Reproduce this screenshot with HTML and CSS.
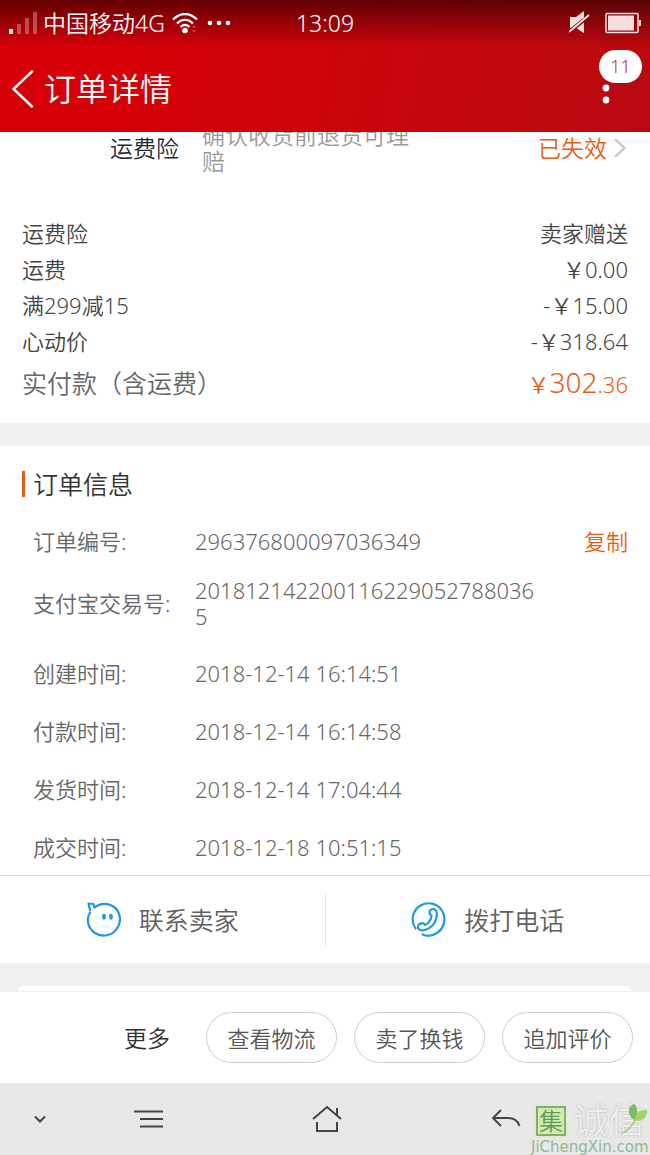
FILE: index.html
```
<!DOCTYPE html>
<html lang="zh-CN">
<head>
    <meta charset="UTF-8">
    <meta name="viewport" content="width=device-width, initial-scale=1.0">
    <title>订单详情</title>
    <link rel="stylesheet" href="styles.css">
</head>
<body>
    <header class="header">
        <div class="status-bar">
            <div class="status-left">
                <svg class="signal" width="28" height="22" viewBox="0 0 28 22" fill="#fff">
                    <rect x="0" y="17" width="4" height="5"/>
                    <rect x="8" y="12" width="4" height="10" opacity=".3"/>
                    <rect x="16" y="6" width="4" height="16" opacity=".3"/>
                    <rect x="24" y="0" width="4" height="22" opacity=".3"/>
                </svg>
                <span class="carrier">中国移动4G</span>
                <svg width="26" height="22" viewBox="0 0 26 22" fill="none" stroke="#fff" stroke-width="2.2">
                    <path d="M1 7.500C8 .2 18 .2 25 7.500M5 11.500c5-4.800 11-4.800 16 0M8.500 15c2.800-2.600 6.200-2.600 9 0"/>
                    <circle cx="13" cy="18.500" r="2.800" fill="#fff" stroke="none"/>
                    <path d="M20 15.500l2-2.500 2 2.500zM20 18l2 2.500 2-2.500z" fill="#e0474c" stroke="none"/>
                </svg>
                <svg class="dots" width="24" height="6" viewBox="0 0 24 6" fill="#fff">
                    <circle cx="3" cy="3" r="2.300"/><circle cx="12" cy="3" r="2.300"/><circle cx="21" cy="3" r="2.300"/>
                </svg>
            </div>
            <time class="clock">13:09</time>
            <div class="status-right">
                <svg width="22" height="24" viewBox="0 0 22 24">
                    <path d="M1 6h6l8-6v22l-8-5H1z" fill="#f7dfdf"/>
                    <path d="M0 21L21 4" stroke="#750508" stroke-width="4"/>
                    <path d="M0 21L20 4" stroke="#f7dfdf" stroke-width="2"/>
                </svg>
                <svg width="36" height="22" viewBox="0 0 36 22">
                    <rect x="1" y="1.500" width="32" height="19" rx="1" fill="none" stroke="#f7dfdf" stroke-width="1.500"/>
                    <rect x="3" y="3.500" width="26" height="15" fill="#f7dfdf"/>
                    <rect x="34" y="8" width="2" height="6" fill="#f7dfdf"/>
                </svg>
            </div>
        </div>
        <div class="title-bar">
            <button class="back" type="button" aria-label="返回">
                <svg width="22" height="38" viewBox="0 0 22 38" fill="none" stroke="#fff" stroke-width="2.500" stroke-linecap="round"><path d="M20 1.500L1.500 19 20 36.500"/></svg>
            </button>
            <h1>订单详情</h1>
            <button class="menu" type="button" aria-label="菜单">
                <svg width="8" height="30" viewBox="0 0 8 30" fill="#fff"><circle cx="4" cy="14" r="3.400"/><circle cx="4" cy="26" r="3.400"/></svg>
                <span class="badge">11</span>
            </button>
        </div>
    </header>

    <main>
        <a class="insurance" href="#">
            <span class="ins-name">运费险</span>
            <span class="ins-desc">确认收货前退货可理赔</span>
            <span class="ins-state">已失效</span>
            <svg width="12" height="20" viewBox="0 0 12 20" fill="none" stroke="#c4c4c4" stroke-width="2"><path d="M1 1l9.500 9L1 19"/></svg>
        </a>

        <dl class="fees">
            <div class="fee"><dt>运费险</dt><dd>卖家赠送</dd></div>
            <div class="fee"><dt>运费</dt><dd>￥0.00</dd></div>
            <div class="fee"><dt>满299减15</dt><dd>-￥15.00</dd></div>
            <div class="fee"><dt>心动价</dt><dd>-￥318.64</dd></div>
            <div class="fee total"><dt>实付款（含运费）</dt><dd>￥<b>302</b>.36</dd></div>
        </dl>

        <section class="info">
            <h2>订单信息</h2>
            <dl>
                <div class="row"><dt>订单编号:</dt><dd>296376800097036349</dd><dd class="action"><button class="copy" type="button">复制</button></dd></div>
                <div class="row long"><dt>支付宝交易号:</dt><dd>2018121422001162290527880365</dd></div>
                <div class="row"><dt>创建时间:</dt><dd>2018-12-14 16:14:51</dd></div>
                <div class="row"><dt>付款时间:</dt><dd>2018-12-14 16:14:58</dd></div>
                <div class="row"><dt>发货时间:</dt><dd>2018-12-14 17:04:44</dd></div>
                <div class="row"><dt>成交时间:</dt><dd>2018-12-18 10:51:15</dd></div>
            </dl>
        </section>

        <div class="contact">
            <button type="button">
                <svg width="35" height="35" viewBox="0 0 35 35" fill="none" stroke="#1d9be2" stroke-width="2.200" stroke-linecap="round" stroke-linejoin="round">
                    <path d="M8.500 5.500C14 1 22 .5 27.500 4.500c7 5 8.500 15 3.500 22-5 7.500-15 9-22 4.500C1.500 26 0 17 4 10.500"/>
                    <path d="M4 8L2.500 1.500l5 .5 1 3"/>
                    <path d="M18 13.500v2.500M25 13.500v2.500" stroke-width="3.600"/>
                </svg>
                <span>联系卖家</span>
            </button>
            <button type="button">
                <svg width="35" height="35" viewBox="0 0 35 35" fill="none" stroke="#1d9be2" stroke-width="2.200" stroke-linecap="round" stroke-linejoin="round">
                    <path d="M4.500 26.500C-1 18 2 8 9.500 3.500c8-4.500 18-2 22 6 4 7.500 1.500 17-5.500 21.500-4.500 3-10 3.500-14.500 1.500"/>
                    <path d="M20.500 13.500c-3-1.500-2.500-6.500 1.500-6.500 3.500 0 4.500 4.500 3.500 8.500-1.500 6-6 11-11.500 12.500-4 1-7.500-.5-7-3.500.5-3.500 5.500-4.500 7-1.500 3.500-1.500 6.500-5.500 6.500-9.500z"/>
                </svg>
                <span>拨打电话</span>
            </button>
        </div>
        <div class="next-card"></div>
    </main>

    <footer>
        <div class="actions">
            <button class="more" type="button">更多</button>
            <button class="pill" type="button">查看物流</button>
            <button class="pill" type="button">卖了换钱</button>
            <button class="pill" type="button">追加评价</button>
        </div>
        <nav class="nav">
            <button type="button" aria-label="收起">
                <svg width="14" height="8" viewBox="0 0 14 8"><path d="M2 1.500l5 5 5-5"/></svg>
            </button>
            <button type="button" aria-label="任务">
                <svg width="30" height="18" viewBox="0 0 30 18"><path d="M0 1.500h29M6 9h23M6 16.500h23"/></svg>
            </button>
            <button type="button" aria-label="主页">
                <svg width="30" height="28" viewBox="0 0 30 28"><path d="M1 14L15 2l14 12M25 3v7M5 17v9h20v-9"/></svg>
            </button>
            <button type="button" aria-label="后退">
                <svg width="30" height="20" viewBox="0 0 30 20"><path d="M10 1L2 9l8 8M2 9h15c6 0 10 3 11.500 8"/></svg>
            </button>
            <div class="watermark">
                <div class="mark-top">
                    <span class="mark-box">集</span>
                    <span class="mark-name">诚信</span>
                    <svg class="leaf" width="26" height="32" viewBox="0 0 26 32">
                        <path d="M13 17C5 14 5 3 12 1c3 2 5 8 1 16z" fill="#7cbc66"/>
                        <path d="M13 18c0-7 5-12 12-11 1 6-4 12-12 11z" fill="#9ed468"/>
                        <path d="M13 17C10 23 6 28 0 30" fill="none" stroke="#94cf70" stroke-width="1.500"/>
                    </svg>
                </div>
                <span class="mark-url">JiChengXin.com</span>
            </div>
        </nav>
    </footer>
</body>
</html>
```

FILE: styles.css
```
* {
    box-sizing: border-box;
}

body {
    margin: 0;
    min-height: 100vh;
    display: flex;
    flex-direction: column;
    background-color: #fff;
    color: #444;
    font-family: "Noto Sans", "Noto Sans CJK SC DemiLight", "Noto Sans CJK SC", sans-serif;
    font-size: 22px;
    font-weight: 350;
    line-height: 26px;
}

h1, h2, dl, dd {
    margin: 0;
    font-weight: 350;
}

button {
    padding: 0;
    border: none;
    background: none;
    color: inherit;
    font: inherit;
    cursor: pointer;
}

svg {
    display: block;
    flex: none;
}

/* header */
.header {
    color: #fff;
    background: linear-gradient(to bottom, rgba(50, 0, 0, 0.7), rgba(70, 0, 0, 0) 46px),
                linear-gradient(100deg, #d60008 20%, #b90a10);
}

.status-bar {
    display: grid;
    grid-template-columns: 1fr auto 1fr;
    align-items: center;
    height: 46px;
    padding: 0 9px;
    font-size: 23px;
}

.status-left, .status-right {
    display: flex;
    align-items: center;
}

.carrier {
    margin: 0 7px 0 6px;
}

.dots {
    margin-left: 9px;
}

.status-right {
    justify-content: flex-end;
    gap: 14px;
}

.title-bar {
    display: flex;
    align-items: center;
    height: 86px;
    padding: 0 40px 0 12px;
}

h1 {
    flex: 1;
    margin-left: 10px;
    font-size: 32px;
    line-height: 40px;
}

.menu {
    position: relative;
}

.badge {
    position: absolute;
    left: -3px;
    top: -24px;
    width: 43px;
    border-radius: 17px;
    background-color: #fff;
    color: #c2184a;
    font-size: 18px;
    line-height: 33px;
}

/* content */
main {
    flex: 1;
    overflow: hidden;
}

.insurance {
    display: flex;
    align-items: center;
    margin-top: -10px;
    padding: 0 24px 0 110px;
    color: #1f2a35;
    text-decoration: none;
    font-size: 23px;
}

.ins-name {
    margin-right: 23px;
}

.ins-desc {
    width: 220px;
    color: #999;
}

.ins-state {
    margin: 0 7px 0 auto;
    color: #ec5a12;
}

.fees {
    padding: 41px 22px 16px;
    border-bottom: 23px solid #f0f0f0;
}

.fee {
    display: flex;
    align-items: center;
    justify-content: space-between;
    height: 36px;
}

.total {
    height: 48px;
}

.total dt {
    color: #666;
    font-size: 25px;
}

.total dd {
    color: #ec5a12;
}

.total b {
    font-size: 28px;
    font-weight: 350;
}

.info {
    padding: 25px 22px 15px;
    color: #666;
}

h2 {
    padding-left: 8px;
    border-left: 3px solid #ec5a12;
    color: #333;
    font-size: 25px;
}

.row {
    display: grid;
    grid-template-columns: 162px 1fr 90px;
    align-items: center;
    margin-top: 32px;
    padding-left: 11px;
}

.row:first-child {
    margin-top: 31px;
}

.long {
    margin-top: 23px;
}

.long + .row {
    margin-top: 31px;
}

.row dd {
    word-break: break-all;
}

.action {
    text-align: right;
}

.copy {
    color: #ec5a12;
}

.contact {
    display: flex;
    align-items: center;
    height: 88px;
    border-top: 1px solid #d8d8d8;
    color: #606060;
    font-size: 25px;
}

.contact button {
    display: flex;
    flex: 1;
    align-items: center;
    justify-content: center;
    gap: 18px;
    height: 52px;
}

.contact button + button {
    border-left: 1px solid #e5e5e5;
}

.next-card {
    height: 29px;
    padding: 23px 18px 0;
    background-color: #f0f0f0;
}

.next-card::before {
    content: "";
    display: block;
    height: 5px;
    border-radius: 16px 16px 0 0;
    background-color: #fff;
}

/* bottom */
.actions {
    display: flex;
    align-items: center;
    justify-content: flex-end;
    gap: 17px;
    height: 91px;
    padding-right: 17px;
    background-color: #fff;
}

.more {
    margin-right: 19px;
    color: #333;
    font-size: 23px;
}

.pill {
    width: 131px;
    height: 51px;
    border: 1px solid #ccc;
    border-radius: 26px;
    color: #555;
}

.nav {
    position: relative;
    display: grid;
    grid-template-columns: 80fr 138fr 218fr 140fr 74fr;
    height: 72px;
    background-color: #e8e8e8;
}

.nav button {
    display: flex;
    align-items: center;
    justify-content: center;
}

.nav button svg {
    fill: none;
    stroke: #444;
    stroke-width: 2;
}

.watermark {
    position: absolute;
    right: 0;
    bottom: 0;
    width: 119px;
}

.mark-top {
    display: flex;
    align-items: center;
    padding-left: 5px;
}

.mark-box {
    width: 30px;
    border: 2px solid #7fae78;
    background-color: #d3eda8;
    box-shadow: 0 0 3px #d3f09c;
    color: #5f9a62;
    font-size: 24px;
    font-weight: 400;
    text-align: center;
}

.mark-name {
    margin-left: 7px;
    color: #efefef;
    font-size: 36px;
    font-weight: 500;
    line-height: 36px;
    white-space: nowrap;
    text-shadow: 0 0 2px #aaa;
}

.leaf {
    position: absolute;
    right: 2px;
    top: 0;
}

.mark-url {
    display: block;
    color: #8dba93;
    font-family: "DejaVu Sans", sans-serif;
    font-size: 15px;
    font-weight: 400;
    line-height: 16px;
}
```
